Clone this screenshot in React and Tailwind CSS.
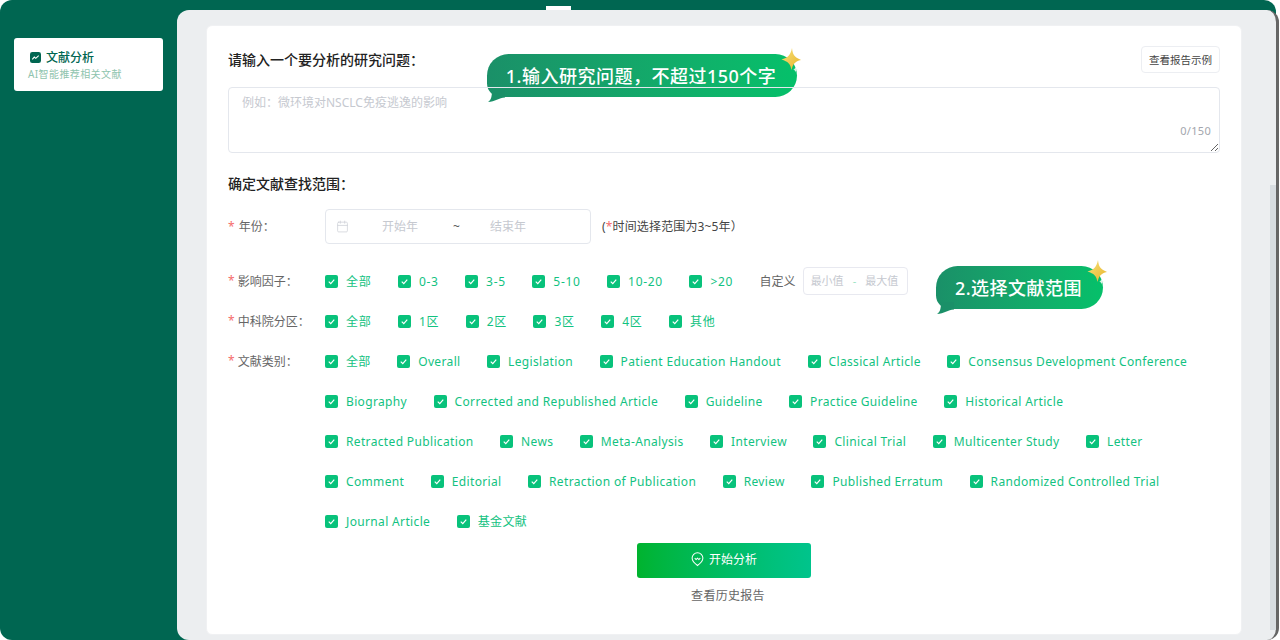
import React from 'react';
import { Calendar } from 'lucide-react';

const impactOptions = ['全部', '0-3', '3-5', '5-10', '10-20', '>20'];
const zoneOptions = ['全部', '1区', '2区', '3区', '4区', '其他'];
const typeOptions = [
  '全部', 'Overall', 'Legislation', 'Patient Education Handout', 'Classical Article',
  'Consensus Development Conference', 'Biography', 'Corrected and Republished Article',
  'Guideline', 'Practice Guideline', 'Historical Article', 'Retracted Publication', 'News',
  'Meta-Analysis', 'Interview', 'Clinical Trial', 'Multicenter Study', 'Letter', 'Comment',
  'Editorial', 'Retraction of Publication', 'Review', 'Published Erratum',
  'Randomized Controlled Trial', 'Journal Article', '基金文献',
];

const CheckItem = ({ label, wide }) => (
  <label className={`mr-[26.5px] flex h-[40px] items-center gap-2 text-xs text-[#12c281] ${wide ? 'tracking-[0.7px]' : 'tracking-[0.35px]'}`}>
    <span className="flex h-[13px] w-[13px] items-center justify-center rounded-[2px] bg-[#08c27b]">
      <svg viewBox="0 0 12 12" className="h-[11px] w-[11px]" fill="none" stroke="#fff" strokeWidth="1.3">
        <path d="M3 6.2l2.2 2.1L9 4" />
      </svg>
    </span>
    <span className="pt-[2px]">{label}</span>
  </label>
);

const Sparkle = () => (
  <svg viewBox="0 0 28 28" className="absolute -right-[8px] -top-[7px] h-[28px] w-[28px]">
    <defs>
      <linearGradient id="star" x1="0" y1="0" x2="1" y2="1">
        <stop offset="0" stopColor="#f7e27a" />
        <stop offset="1" stopColor="#e8b32a" />
      </linearGradient>
    </defs>
    <path d="M15 1c.6 6 2 9 9 12-6 1.500-8 4-9.500 10-1-6-3.500-8.500-10-10.500C11 11 13.500 8 15 1z" fill="url(#star)" />
    <path d="M18.500 19.500c.3 2 .8 2.600 2.500 3-1.700.4-2.200 1-2.500 3-.3-2-.8-2.600-2.500-3 1.700-.4 2.200-1 2.500-3z" fill="#d5f2e4" />
  </svg>
);

const Bubble = ({ className, children }) => (
  <div className={`absolute flex h-[43px] items-center justify-center rounded-[22px] rounded-bl-[14px] bg-gradient-to-r from-[#1a9068] to-[#05c06a] pr-[2px] text-lg font-medium tracking-[0.5px] text-white ${className}`}>
    <svg viewBox="0 0 18 12" className="absolute -bottom-[5px] left-0 h-[12px] w-[18px]">
      <path d="M1 12C4 10 5 7 5 0h13v7.500C12 8 8 11.500 1 12z" fill="#1a9068" />
    </svg>
    <span className="relative">{children}</span>
    <Sparkle />
  </div>
);

const FormRow = ({ label, children }) => (
  <div className="flex items-start">
    <div className="flex h-[40px] w-[97px] shrink-0 items-center text-xs text-[#666]">
      <span className="mr-[3px] text-[#f56c6c]">*</span>
      <span className="pt-[2px]">{label}</span>
    </div>
    {children}
  </div>
);

export default function App() {
  return (
    <div className="h-[640px] overflow-hidden bg-white font-['Noto_Sans','Noto_Sans_CJK_SC',sans-serif]">
      <div className="flex h-[640px] w-[1276px] rounded-[12px] bg-[#006651] pt-[10px]">
        {/* Sidebar */}
        <aside className="w-[177px] shrink-0 pl-[14px] pt-[28px]">
          <div className="h-[53px] w-[149px] rounded-[3px] bg-white pl-[14px] pt-[10px]">
            <div className="flex h-[18px] items-center text-xs font-medium text-[#006651]">
              <svg viewBox="0 0 12 12" className="ml-[2px] mr-[5px] h-[11px] w-[11px]">
                <rect width="12" height="12" rx="2.500" fill="#006651" />
                <path d="M2.500 8l2.200-2.500 1.600 1.400L9.500 4" stroke="#fff" strokeWidth="1.200" fill="none" />
              </svg>
              <span className="pt-[2px]">文献分析</span>
            </div>
            <div className="text-[10px] leading-[16px] tracking-[0.4px] text-[#8fc4ae]">AI智能推荐相关文献</div>
          </div>
        </aside>

        {/* Main */}
        <main className="relative h-[630px] w-[1102px] shrink-0 rounded-[12px] border-r-[3px] border-[#666] bg-[#eceef0] pl-[29px] pt-[15px]">
          <div className="absolute left-[369px] -top-[4px] h-[4px] w-[25px] bg-white" />
          <div className="absolute right-0 top-[175px] h-[445px] w-[6px] bg-[#d8dde1]" />

          <div className="relative h-[610px] w-[1036px] rounded-[6px] border border-[#f0f1f3] bg-white px-[21px] pt-[20px]">
            <Bubble className="left-[280px] top-[28px] w-[310px]">1.输入研究问题，不超过150个字</Bubble>
            <Bubble className="left-[729px] top-[240px] w-[167px]">2.选择文献范围</Bubble>

            <div className="flex h-[27px] items-center justify-between">
              <h2 className="text-sm font-medium text-[#222]">请输入一个要分析的研究问题：</h2>
              <button className="h-[27px] w-[79px] rounded-[4px] border border-[#eceef2] pt-[2px] text-[10.5px] text-[#444]">查看报告示例</button>
            </div>

            <div className="relative mt-[14px] h-[66px]">
              <textarea
                className="block h-[66px] w-full resize-y rounded-[4px] border border-[#e4e7ed] px-[13px] py-[7px] text-xs outline-none placeholder:text-[#c6c9d0]"
                placeholder="例如：微环境对NSCLC免疫逃逸的影响"
              />
              <span className="absolute bottom-[14px] right-[9px] text-[11px] tracking-[0.3px] text-[#a3a6ad]">0/150</span>
            </div>

            <h2 className="mt-[21px] text-sm leading-[20px] font-medium text-[#222]">确定文献查找范围：</h2>

            {/* Year range */}
            <div className="mt-[15px] flex h-[35px] items-center">
              <div className="flex w-[97px] items-center text-xs text-[#666]">
                <span className="mr-[4px] text-[#f56c6c]">*</span>
                <span className="pt-[1px]">年份：</span>
              </div>
              <div className="flex h-[35px] w-[266px] items-center rounded-[4px] border border-[#e4e7ed] pl-[10px] text-xs text-[#c6c9d0]">
                <Calendar className="h-[13px] w-[13px] text-[#d0d3d9]" strokeWidth={1.5} />
                <span className="ml-[33px]">开始年</span>
                <span className="ml-[35px] text-[#555]">~</span>
                <span className="ml-[30px]">结束年</span>
              </div>
              <span className="ml-[11px] text-xs tracking-[0.15px] text-[#444]">
                (<span className="text-[#f56c6c]">*</span>时间选择范围为3~5年）
              </span>
            </div>

            <div className="mt-[17px]">
              <FormRow label="影响因子：">
                <div className="flex items-center">
                  {impactOptions.map((o) => (
                    <CheckItem key={o} label={o} wide />
                  ))}
                  <span className="pt-[2px] text-xs text-[#666]">自定义</span>
                  <div className="ml-[7px] flex h-[28px] w-[105px] items-center rounded-[4px] border border-[#e8e9f0] pl-[7px] text-[11px] text-[#c6c9d0]">
                    最小值
                    <span className="mx-[9px] text-[#9be3c4]">-</span>
                    最大值
                  </div>
                </div>
              </FormRow>
              <FormRow label="中科院分区：">
                <div className="flex">
                  {zoneOptions.map((o) => (
                    <CheckItem key={o} label={o} wide />
                  ))}
                </div>
              </FormRow>
              <FormRow label="文献类别：">
                <div className="flex flex-1 flex-wrap">
                  {typeOptions.map((o) => (
                    <CheckItem key={o} label={o} />
                  ))}
                </div>
              </FormRow>
            </div>

            <div className="mt-[2px] flex flex-col items-center">
              <button className="flex h-[35px] w-[174px] items-center justify-center gap-[5px] rounded-[3px] bg-gradient-to-r from-[#00b32e] to-[#00c48c] pb-[2px] text-xs text-white">
                <svg viewBox="0 0 14 16" className="h-[15px] w-[13px]" fill="none" stroke="#fff" strokeWidth="1.100">
                  <path d="M7 14.500C3.500 12 1.200 9.500 1.200 6.500a5.800 5.800 0 0 1 11.600 0C12.800 9.500 10.500 12 7 14.500z" />
                  <path d="M4 6.500l1.500 1.500L7 6.500 8.500 8 10 6.500" />
                </svg>
                开始分析
              </button>
              <a className="ml-[8px] mt-[8px] text-xs leading-[20px] tracking-[0.3px] text-[#666]">查看历史报告</a>
            </div>
          </div>
        </main>
      </div>
    </div>
  );
}
